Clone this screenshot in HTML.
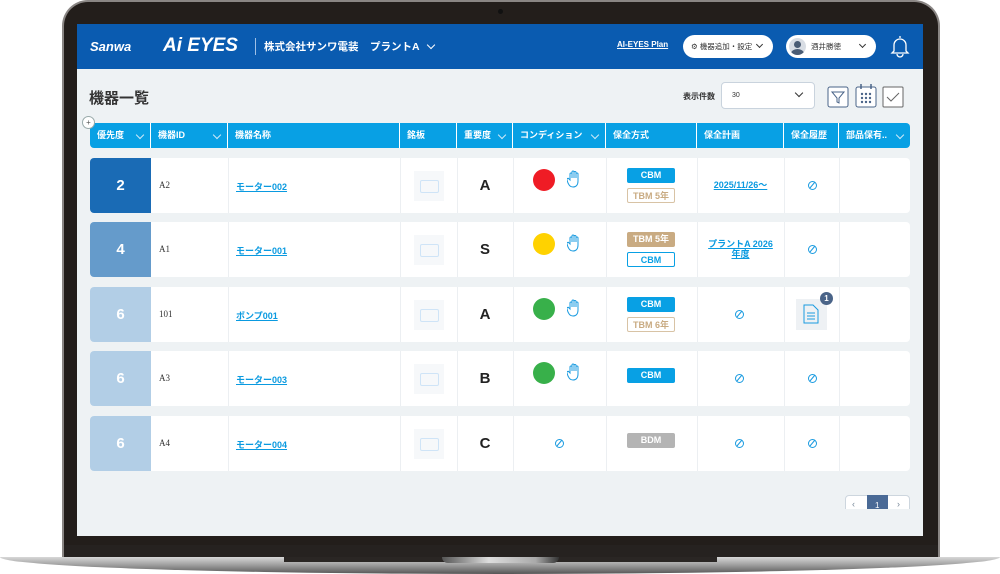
<!DOCTYPE html>
<html><head><meta charset="utf-8"><style>
*{margin:0;padding:0;box-sizing:border-box}
body{width:1000px;height:574px;background:#fff;position:relative;overflow:hidden;font-family:"Liberation Sans","Noto Sans CJK JP",sans-serif}
.a{position:absolute}
.laptop{left:62px;top:0;width:878px;height:560px;background:#231e1b;border-radius:26px 26px 0 0;border:2px solid #8a8684;border-bottom:none}
.screen{left:77px;top:24px;width:846px;height:512px;background:#eef2f4;overflow:hidden}
.hdr{left:0;top:0;width:846px;height:45px;background:#0a5bb0}
.th{position:absolute;top:99px;height:25px;background:#08a0e4;color:#fff;font-size:9px;font-weight:bold;line-height:25px;padding-left:7px;border-right:1px solid #fff}
.chev{position:absolute;right:7px;top:9px;width:6px;height:6px;border-right:1px solid #cfe9f8;border-bottom:1px solid #cfe9f8;transform:rotate(45deg)}
.link{color:#0a9ae0;text-decoration:underline;font-weight:bold;font-size:9px}
.tag{position:absolute;width:48px;height:15px;font-size:9px;font-weight:bold;text-align:center;line-height:14px;border-radius:2px}
.cbm{background:#08a0e4;color:#fff}
.cbmo{border:1.5px solid #08a0e4;color:#08a0e4;background:#fff}
.tbm{background:#c9ab82;color:#fff}
.tbmo{border:1.5px solid #d8c3a5;color:#c9ab82;background:#fff}
.edit{position:absolute;width:9px;height:9px;border:1.2px solid #1a9be0;border-radius:50%}
.edit:after{content:"";position:absolute;left:2.7px;top:-1px;width:1.2px;height:8px;background:#1a9be0;transform:rotate(40deg)}
.plate{position:absolute;width:30px;height:30px;background:#f6f8fa}
.plate:after{content:"";position:absolute;left:6px;top:9px;width:17px;height:11px;border:1.5px solid #cfe4f7;border-radius:2px}
.dot{position:absolute;width:22px;height:22px;border-radius:50%}
</style></head><body>
<div class="a laptop"></div>
<div class="a" style="left:498px;top:9px;width:5px;height:5px;border-radius:50%;background:#111"></div>
<div class="a" style="left:64px;top:545px;width:874px;height:14px;background:#262220"></div>
<div class="a" style="left:0;top:557px;width:1000px;height:17px;background:linear-gradient(#d8d8d8,#9a9a9a 50%,#555);border-radius:0 0 50% 50%/0 0 100% 100%"></div>
<div class="a" style="left:284px;top:557px;width:433px;height:5px;background:#2a2624"></div>
<div class="a" style="left:442px;top:557px;width:117px;height:6px;background:linear-gradient(90deg,#555,#ddd 40%,#aaa 80%,#333);border-radius:0 0 6px 6px"></div>

<div class="a screen">
 <div class="a hdr"></div>
 <div class="a" style="left:13px;top:15px;color:#fff;font-style:italic;font-weight:bold;font-size:13px">Sanwa</div>
 <div class="a" style="left:86px;top:11px;color:#fff;font-style:italic;font-weight:bold;font-size:19px">Ai EYES</div>
 <div class="a" style="left:178px;top:14px;width:1px;height:17px;background:#9fc0e6"></div>
 <div class="a" style="left:187px;top:15px;color:#fff;font-weight:bold;font-size:10.5px">株式会社サンワ電装</div>
 <div class="a" style="left:293px;top:15px;color:#fff;font-weight:bold;font-size:10.5px">プラントA</div>
 <div class="a" style="left:351px;top:18px;width:6px;height:6px;border-right:1px solid #fff;border-bottom:1px solid #fff;transform:rotate(45deg)"></div>
 <div class="a" style="left:540px;top:16px;color:#fff;font-size:8px;text-decoration:underline;font-weight:bold">AI-EYES Plan</div>
 <div class="a" style="left:606px;top:11px;width:90px;height:23px;background:#fff;border-radius:12px;font-size:7.5px;color:#333;line-height:23px;padding-left:8px">⚙ 機器追加・設定</div>
 <div class="a" style="left:680px;top:18px;width:5px;height:5px;border-right:1px solid #333;border-bottom:1px solid #333;transform:rotate(45deg)"></div>
 <div class="a" style="left:709px;top:11px;width:90px;height:23px;background:#fff;border-radius:12px;font-size:7.5px;color:#333;line-height:23px;padding-left:25px">酒井勝徳</div>
 <div class="a" style="left:712px;top:14px;width:17px;height:17px;border-radius:50%;background:#d8dde4;overflow:hidden"><div class="a" style="left:5px;top:3px;width:7px;height:7px;border-radius:50%;background:#4a5c74"></div><div class="a" style="left:2px;top:11px;width:13px;height:9px;border-radius:50%;background:#4a5c74"></div></div>
 <div class="a" style="left:783px;top:18px;width:5px;height:5px;border-right:1px solid #333;border-bottom:1px solid #333;transform:rotate(45deg)"></div>
 <svg class="a" style="left:812px;top:10px" width="22" height="24" viewBox="0 0 22 24"><path d="M11 2v2M5 17V11a6 6 0 0 1 12 0v6l2 2H3z M8 20a3 3 0 0 0 6 0" fill="none" stroke="#fff" stroke-width="1.3"/></svg>

 <div class="a" style="left:12px;top:63px;font-size:15px;font-weight:bold;color:#333">機器一覧</div>
 <div class="a" style="left:606px;top:67px;font-size:8px;font-weight:bold;color:#333">表示件数</div>
 <div class="a" style="left:644px;top:58px;width:94px;height:27px;background:#fff;border:1px solid #c9d3dd;border-radius:4px;font-size:7px;color:#333;line-height:25px;padding-left:10px">30</div>
 <div class="a" style="left:719px;top:66px;width:6px;height:6px;border-right:1px solid #333;border-bottom:1px solid #333;transform:rotate(45deg)"></div>
 <svg class="a" style="left:750px;top:62px" width="22" height="22"><rect x="1" y="1" width="20" height="20" rx="2" fill="#fff" stroke="#4a6488"/><path d="M5 6h12l-5 6v5l-2-1v-4z" fill="none" stroke="#4a6488"/></svg>
 <svg class="a" style="left:778px;top:59px" width="22" height="26"><rect x="1" y="4" width="20" height="20" rx="2" fill="#fff" stroke="#4a6488"/><path d="M6 1v5M16 1v5" stroke="#4a6488" stroke-width="1.5"/><g fill="#4a6488"><circle cx="7" cy="11" r="1.2"/><circle cx="11" cy="11" r="1.2"/><circle cx="15" cy="11" r="1.2"/><circle cx="7" cy="15" r="1.2"/><circle cx="11" cy="15" r="1.2"/><circle cx="15" cy="15" r="1.2"/><circle cx="7" cy="19" r="1.2"/><circle cx="11" cy="19" r="1.2"/><circle cx="15" cy="19" r="1.2"/></g></svg>
 <svg class="a" style="left:805px;top:62px" width="22" height="22"><rect x="1" y="1" width="20" height="20" rx="1" fill="#fff" stroke="#666"/><path d="M5 11l4 4 8-8" fill="none" stroke="#666"/></svg>

 <div class="th" style="left:13px;width:61px;border-radius:4px 0 0 4px">優先度<span class="chev"></span></div>
 <div class="th" style="left:74px;width:77px">機器ID<span class="chev"></span></div>
 <div class="th" style="left:151px;width:172px">機器名称</div>
 <div class="th" style="left:323px;width:57px">銘板</div>
 <div class="th" style="left:380px;width:56px">重要度<span class="chev"></span></div>
 <div class="th" style="left:436px;width:93px">コンディション<span class="chev"></span></div>
 <div class="th" style="left:529px;width:91px">保全方式</div>
 <div class="th" style="left:620px;width:87px">保全計画</div>
 <div class="th" style="left:707px;width:55px">保全履歴</div>
 <div class="th" style="left:762px;width:71px;border-radius:0 4px 4px 0;border-right:none">部品保有..<span class="chev"></span></div>
 <div class="a" style="left:5px;top:92px;width:13px;height:13px;border-radius:50%;background:#fff;border:1px solid #9aa;font-size:8px;text-align:center;line-height:11px;color:#555">+</div>

 <div id="rows"></div>
</div>

<script>
var rows=[
 {y:134,p:"2",pc:"#1a6bb5",id:"A2",name:"モーター002",imp:"A",dot:"#ef1c25",tags:[["cbm","CBM"],["tbmo","TBM 5年"]],plan:"2025/11/26〜",hist:"e"},
 {y:198,p:"4",pc:"#659bcb",id:"A1",name:"モーター001",imp:"S",dot:"#ffd200",tags:[["tbm","TBM 5年"],["cbmo","CBM"]],plan:"プラントA 2026<br>年度",hist:"e"},
 {y:263,p:"6",pc:"#b2cee6",id:"101",name:"ポンプ001",imp:"A",dot:"#38b04a",tags:[["cbm","CBM"],["tbmo","TBM 6年"]],plan:"e",hist:"doc"},
 {y:327,p:"6",pc:"#b2cee6",id:"A3",name:"モーター003",imp:"B",dot:"#38b04a",tags:[["cbm","CBM"]],plan:"e",hist:"e"},
 {y:392,p:"6",pc:"#b2cee6",id:"A4",name:"モーター004",imp:"C",dot:null,tags:[["bdm","BDM"]],plan:"e",hist:"e"}
];
var h="";
rows.forEach(function(r){
 var y=r.y,H=55,m=y+H/2;
 h+='<div class="a" style="left:13px;top:'+y+'px;width:820px;height:'+H+'px;background:#fff;border-radius:4px"></div>';
 h+='<div class="a" style="left:13px;top:'+y+'px;width:61px;height:'+H+'px;background:'+r.pc+';border-radius:4px 0 0 4px;color:#fff;font-weight:bold;font-size:15px;text-align:center;line-height:'+H+'px">'+r.p+'</div>';
 [151,323,380,436,529,620,707,762].forEach(function(x){h+='<div class="a" style="left:'+x+'px;top:'+y+'px;width:1px;height:'+H+'px;background:#eceff2"></div>'});
 h+='<div class="a" style="left:82px;top:'+(m-6)+'px;font-size:9px;color:#333;font-family:Liberation Serif,serif">'+r.id+'</div>';
 h+='<div class="a link" style="left:159px;top:'+(m-6)+'px">'+r.name+'</div>';
 h+='<div class="plate" style="left:337px;top:'+(m-15)+'px"></div>';
 h+='<div class="a" style="left:380px;width:56px;top:'+(m-9)+'px;text-align:center;font-size:15px;font-weight:bold;color:#222">'+r.imp+'</div>';
 if(r.dot){h+='<div class="dot" style="left:456px;top:'+(y+11)+'px;background:'+r.dot+'"></div>';h+='<svg class="a" style="left:490px;top:'+(y+12)+'px" width="14" height="18" viewBox="0 0 14 18"><path d="M3 10V4a1 1 0 0 1 2 0v4V2a1 1 0 0 1 2 0v6V2.5a1 1 0 0 1 2 0V8V4a1 1 0 0 1 2 0v7c0 4-2 6-5 6s-4-2-5-4l-1-3a1 1 0 0 1 2-1z" fill="none" stroke="#1a9be0" stroke-width="1"/></svg>';}
 else h+='<div class="edit" style="left:478px;top:'+(m-5)+'px"></div>';
 var ty=r.tags.length==2?y+10:y+17;
 r.tags.forEach(function(t,i){
  h+='<div class="tag '+(t[0]=="bdm"?'':t[0])+'" style="'+(t[0]=="bdm"?'background:#b4b4b4;color:#fff;':'')+'left:550px;top:'+(ty+i*20)+'px">'+t[1]+'</div>';});
 if(r.plan=="e")h+='<div class="edit" style="left:658px;top:'+(m-5)+'px"></div>';
 else h+='<div class="a link" style="left:620px;width:87px;text-align:center;top:'+(r.plan.length>14?m-11:m-6)+'px;line-height:10px">'+r.plan+'</div>';
 if(r.hist=="e")h+='<div class="edit" style="left:731px;top:'+(m-5)+'px"></div>';
 else{h+='<div class="a" style="left:719px;top:'+(y+12)+'px;width:31px;height:31px;background:#eef1f4"></div><svg class="a" style="left:726px;top:'+(y+17)+'px" width="16" height="20"><path d="M1 1h9l5 5v13H1z M4 9h8M4 12h8M4 15h8" fill="none" stroke="#1a9be0"/></svg><div class="a" style="left:743px;top:'+(y+5)+'px;width:13px;height:13px;border-radius:50%;background:#4a6488;color:#fff;font-size:8px;font-weight:bold;text-align:center;line-height:13px">1</div>';}
});
h+='<div class="a" style="left:768px;top:471px;width:65px;height:40px;background:#fff;border:1px solid #cdd6de;border-radius:4px"></div>';
h+='<div class="a" style="left:790px;top:471px;width:21px;height:40px;background:#4a6a96"></div>';
h+='<div class="a" style="left:775px;top:475px;font-size:9px;color:#789">‹</div><div class="a" style="left:820px;top:475px;font-size:9px;color:#789">›</div><div class="a" style="left:798px;top:477px;font-size:8px;color:#fff">1</div>';
h+='<div class="a" style="left:0;top:485px;width:846px;height:27px;background:#eef2f4"></div>';
document.getElementById("rows").outerHTML=h;
</script>
</body></html>
